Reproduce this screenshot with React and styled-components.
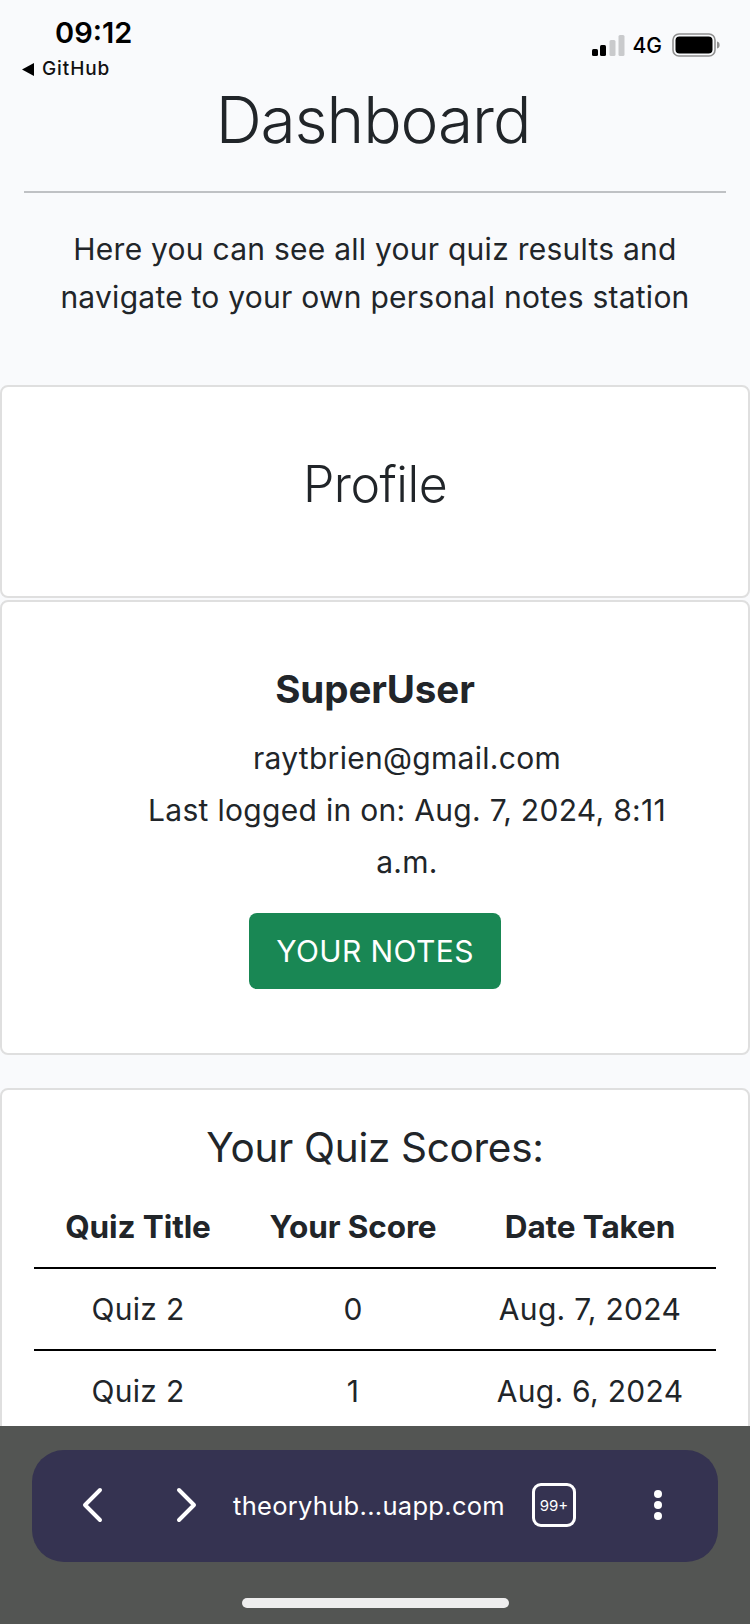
import React from "react";
import styled, { createGlobalStyle } from "styled-components";

const GlobalStyle = createGlobalStyle`
  html, body {
    margin: 0;
    padding: 0;
    background: #f8f9fa;
  }
  * { box-sizing: border-box; }
`;

const Phone = styled.div`
  width: 750px;
  height: 1624px;
  overflow: hidden;
  display: flex;
  flex-direction: column;
  background: #f9fafc;
  color: #212529;
  font-family: Inter, "Liberation Sans", sans-serif;
`;

const Scroll = styled.main`
  flex: 1;
  min-height: 0;
  overflow: hidden;
`;

const StatusBar = styled.div`
  height: 86px;
  padding: 16px 30px 0 22px;
  display: flex;
  justify-content: space-between;
  color: #000;
`;

const StatusLeft = styled.div`
  display: flex;
  flex-direction: column;
  align-items: flex-start;
`;

const Clock = styled.div`
  margin-left: 33px;
  font-size: 29px;
  line-height: 34px;
  font-weight: 600;
`;

const BackLink = styled.div`
  display: flex;
  align-items: center;
  gap: 8px;
  margin-top: 8px;
  font-size: 19px;
  line-height: 22px;
  font-weight: 500;
  letter-spacing: 0.9px;
  color: #111;
`;

const StatusRight = styled.div`
  display: flex;
  align-items: center;
  height: 24px;
  margin-top: 17px;
  font-size: 21px;
  font-weight: 500;
`;

const NetworkLabel = styled.span`
  margin: 0 10px 0 8px;
`;

const Title = styled.h1`
  margin: 0;
  padding-right: 4px;
  font-size: 64px;
  line-height: 68px;
  font-weight: 300;
  letter-spacing: -1.1px;
  text-align: center;
`;

const Rule = styled.hr`
  margin: 37px 24px 0;
  border: 0;
  height: 2px;
  background: #bfc1c4;
`;

const Lead = styled.p`
  margin: 32px 0 0;
  padding: 0 24px;
  font-size: 30px;
  line-height: 48px;
  font-weight: 400;
  letter-spacing: 0.25px;
  text-align: center;
`;

const Card = styled.section`
  background: #fff;
  border: 2px solid #dfdfdf;
  border-radius: 8px;
  margin-top: ${(p) => p.$gap}px;
  height: ${(p) => p.$height}px;
  overflow: ${(p) => (p.$clip ? "hidden" : "visible")};
`;

const ProfileHead = styled(Card)`
  display: flex;
  align-items: center;
  justify-content: center;
  padding-bottom: 15px;
`;

const ProfileTitle = styled.h2`
  margin: 0;
  font-size: 50px;
  font-weight: 300;
  letter-spacing: -0.5px;
`;

const ProfileBody = styled(Card)`
  padding: 63px 64px 0;
  display: flex;
  flex-direction: column;
  align-items: center;
`;

const UserName = styled.h3`
  margin: 0;
  font-size: 38.5px;
  line-height: 48px;
  font-weight: 700;
  letter-spacing: -0.1px;
`;

const Details = styled.ul`
  list-style: none;
  margin: 19px 0 0;
  padding: 0 0 0 64px;
  width: 100%;
`;

const Detail = styled.li`
  font-size: 30px;
  line-height: 52px;
  letter-spacing: 0.3px;
  text-align: center;
`;

const NotesButton = styled.a`
  display: flex;
  align-items: center;
  justify-content: center;
  width: 252px;
  height: 76px;
  margin-top: 25px;
  background: #198754;
  border-radius: 8px;
  color: #fff;
  font-size: 30px;
  letter-spacing: 0.4px;
`;

const ScoresTitle = styled.h2`
  margin: 32px 0 0;
  font-size: 40.5px;
  line-height: 52px;
  font-weight: 400;
  letter-spacing: -0.3px;
  text-align: center;
`;

const ScoresTable = styled.table`
  width: 682px;
  margin: 12px 0 0 32px;
  border-collapse: collapse;
  table-layout: fixed;
`;

const HeadCell = styled.th`
  height: 82px;
  padding: 0;
  font-size: 31.5px;
  font-weight: 700;
  letter-spacing: -0.1px;
  text-align: center;
  border-bottom: 2px solid #000;
`;

const Cell = styled.td`
  height: 82px;
  padding: 0;
  font-size: 30px;
  letter-spacing: 0.3px;
  text-align: center;
  border-bottom: 2px solid #000;
`;

const BottomArea = styled.div`
  height: 198px;
  flex: none;
  background: #535553;
  padding: 24px 32px 0;
  display: flex;
  flex-direction: column;
  align-items: center;
`;

const BrowserPill = styled.nav`
  width: 686px;
  height: 112px;
  flex: none;
  border-radius: 32px;
  background: #353351;
  display: flex;
  align-items: center;
  color: #fff;
  padding: 0 0 2px 49px;
`;

const NavIcon = styled.svg`
  width: 22px;
  height: 36px;
  flex: none;
  margin-right: ${(p) => p.$gap}px;
`;

const Url = styled.span`
  font-size: 25.5px;
  letter-spacing: 0.3px;
  white-space: nowrap;
`;

const TabCount = styled.span`
  width: 44px;
  height: 44px;
  margin-left: 27px;
  border: 3.5px solid #fff;
  border-radius: 9px;
  display: flex;
  align-items: center;
  justify-content: center;
  font-size: 15px;
  flex: none;
`;

const Dots = styled.span`
  margin-left: 78px;
  display: flex;
  flex-direction: column;
  gap: 3px;
`;

const Dot = styled.i`
  width: 8px;
  height: 8px;
  border-radius: 50%;
  background: #fff;
`;

const HomeBar = styled.div`
  width: 267px;
  height: 10px;
  margin-top: 36px;
  border-radius: 5px;
  background: #eeeeee;
`;

const Signal = () => (
  <svg width="33" height="21" viewBox="0 0 33 21">
    <rect x="0" y="14" width="6" height="7" rx="1.5" fill="#000" />
    <rect x="8" y="10" width="6" height="11" rx="1.5" fill="#000" />
    <rect x="17.5" y="5" width="6" height="16" rx="1.5" fill="#c9cacc" />
    <rect x="26.5" y="0" width="6" height="21" rx="1.5" fill="#c9cacc" />
  </svg>
);

const Battery = () => (
  <svg width="48" height="24" viewBox="0 0 48 24">
    <rect x="1" y="1" width="42" height="22" rx="6" fill="none" stroke="#8f8f8f" strokeWidth="1.6" />
    <rect x="3.5" y="3.5" width="37" height="17" rx="4" fill="#000" />
    <path d="M45 8.5c2 .6 2.6 1.8 2.6 3.5s-.6 2.9-2.6 3.5z" fill="#8f8f8f" />
  </svg>
);

const scores = [
  { title: "Quiz 2", score: 0, date: "Aug. 7, 2024" },
  { title: "Quiz 2", score: 1, date: "Aug. 6, 2024" },
];

const App = () => (
  <>
    <GlobalStyle />
    <Phone>
      <Scroll>
        <StatusBar>
          <StatusLeft>
            <Clock>09:12</Clock>
            <BackLink>
              <svg width="12" height="13" viewBox="0 0 12 13">
                <path d="M12 0v13L0 6.5z" fill="#000" />
              </svg>
              GitHub
            </BackLink>
          </StatusLeft>
          <StatusRight>
            <Signal />
            <NetworkLabel>4G</NetworkLabel>
            <Battery />
          </StatusRight>
        </StatusBar>
        <Title>Dashboard</Title>
        <Rule />
        <Lead>
          Here you can see all your quiz results and navigate to your own personal notes station
        </Lead>
        <ProfileHead $gap={64} $height={213}>
          <ProfileTitle>Profile</ProfileTitle>
        </ProfileHead>
        <ProfileBody $gap={2} $height={455}>
          <UserName>SuperUser</UserName>
          <Details>
            <Detail>raytbrien@gmail.com</Detail>
            <Detail>Last logged in on: Aug. 7, 2024, 8:11 a.m.</Detail>
          </Details>
          <NotesButton>YOUR NOTES</NotesButton>
        </ProfileBody>
        <Card $gap={33} $height={500} $clip>
          <ScoresTitle>Your Quiz Scores:</ScoresTitle>
          <ScoresTable>
            <colgroup>
              <col width="208" />
              <col width="222" />
              <col width="252" />
            </colgroup>
            <thead>
              <tr>
                <HeadCell>Quiz Title</HeadCell>
                <HeadCell>Your Score</HeadCell>
                <HeadCell>Date Taken</HeadCell>
              </tr>
            </thead>
            <tbody>
              {scores.map((row) => (
                <tr key={row.date}>
                  <Cell>{row.title}</Cell>
                  <Cell>{row.score}</Cell>
                  <Cell>{row.date}</Cell>
                </tr>
              ))}
            </tbody>
          </ScoresTable>
        </Card>
      </Scroll>
      <BottomArea>
        <BrowserPill>
          <NavIcon viewBox="0 0 22 36" $gap={73}>
            <path d="M19 3 4 18l15 15" fill="none" stroke="#fff" strokeWidth="4" strokeLinecap="round" strokeLinejoin="round" />
          </NavIcon>
          <NavIcon viewBox="0 0 22 36" $gap={35}>
            <path d="M3 3l15 15L3 33" fill="none" stroke="#fff" strokeWidth="4" strokeLinecap="round" strokeLinejoin="round" />
          </NavIcon>
          <Url>theoryhub...uapp.com</Url>
          <TabCount>99+</TabCount>
          <Dots>
            <Dot />
            <Dot />
            <Dot />
          </Dots>
        </BrowserPill>
        <HomeBar />
      </BottomArea>
    </Phone>
  </>
);

export default App;
